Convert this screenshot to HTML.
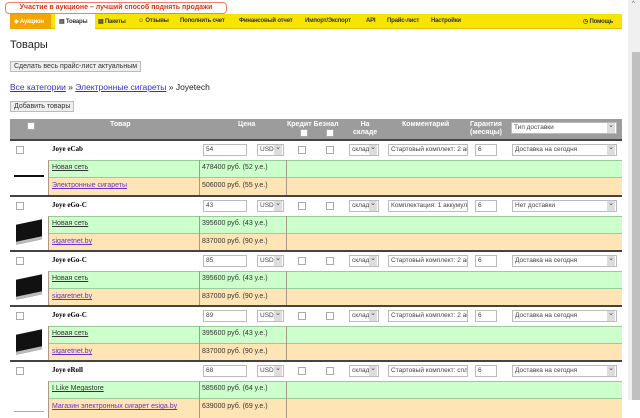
<!DOCTYPE html>
<html><head><meta charset="utf-8"><style>
*{margin:0;padding:0;box-sizing:border-box}
body{width:640px;height:400px;overflow:hidden;background:#fff;font-family:"Liberation Sans",sans-serif;position:relative}
.a{position:absolute}
.notice{left:5px;top:2px;width:222px;height:12px;border:1px solid #f08060;border-radius:4px;color:#e03010;font-size:7px;font-weight:bold;text-align:center;line-height:10px;background:#fff}
.nav{left:10px;top:14px;width:612px;height:15px;background:#f7e400;border-bottom:1px solid #e0c000}
.nav span{position:absolute;top:4px;font-size:6px;font-weight:bold;color:#333;white-space:nowrap;letter-spacing:-0.2px}
.btn{background:#eee;border:1px solid #bbb;font-size:7px;color:#333;padding:0 3px;height:11px;line-height:9px}
a,.lnk{color:#33c;text-decoration:underline}
.hd{left:10px;top:119px;width:612px;height:22px;background:#9c9c9c}
.hd span{position:absolute;color:#fff;font-size:7px;font-weight:bold;text-align:center;line-height:8px}
.cb{position:absolute;width:8px;height:8px;border:1px solid #aaa;background:#fff}
.blk{position:absolute;left:10px;width:612px;height:56px;border-top:2px solid #444}
.blk .w{position:absolute;left:0;top:0;width:612px;height:19px;background:#fff}
.blk .g{position:absolute;left:0;top:19px;width:612px;height:18px;background:#ccffcc;border-top:1px solid #9c9;border-bottom:1px solid #9c9}
.blk .p{position:absolute;left:0;top:37px;width:612px;height:19px;background:#ffe4b5}
.blk .img{position:absolute;left:0;top:19px;width:38px;height:37px;background:#fff}
.vl{position:absolute;top:19px;width:1px;height:37px;background:#a98}
.in{position:absolute;top:3px;height:12px;border:1px solid #bbb;background:#fff;font-size:6.5px;color:#444;line-height:10px;padding-left:2px;white-space:nowrap;overflow:hidden}
.sel:after{content:"⌄";position:absolute;right:1px;top:0;width:8px;height:10px;background:#ddd;font-size:7px;line-height:6px;text-align:center}
.nm{position:absolute;left:42px;top:4px;font-size:7px;font-weight:bold;font-family:"Liberation Serif",serif}
.tx{position:absolute;font-size:7px;color:#333;white-space:nowrap}
.im{position:absolute;left:6px;top:6px;width:26px;height:20px;background:#111;transform:skewY(-12deg);border-bottom:3px solid #bbb}
</style></head><body>
<div class="a notice">Участие в аукционе – лучший способ поднять продажи</div>
<div class="a nav">
<div class="a" style="left:0;top:0;width:41px;height:15px;background:#f5a500"></div>
<div class="a" style="left:45px;top:0;width:40px;height:16px;background:#fff"></div>
<span style="left:4px;color:#fff">◆ Аукцион</span>
<span style="left:49px">▤ Товары</span>
<span style="left:88px">▤ Пакеты</span>
<span style="left:128px">☺ Отзывы</span>
<span style="left:170px">Пополнить счет</span>
<span style="left:229px">Финансовый отчет</span>
<span style="left:295px">Импорт/Экспорт</span>
<span style="left:356px">API</span>
<span style="left:377px">Прайс-лист</span>
<span style="left:421px">Настройки</span>
<span style="left:573px">◷ Помощь</span>
</div>
<div class="a" style="left:10px;top:39px;font-size:11px;color:#222">Товары</div>
<div class="a btn" style="left:10px;top:61px">Сделать весь прайс-лист актуальным</div>
<div class="a" style="left:10px;top:82px;font-size:8.5px;color:#222"><span class="lnk">Все категории</span> » <span class="lnk">Электронные сигареты</span> » Joyetech</div>
<div class="a btn" style="left:10px;top:101px">Добавить товары</div>
<div class="a hd">
<div class="cb" style="left:17px;top:3px"></div>
<span style="left:100px;top:2px">Товар</span>
<span style="left:228px;top:2px">Цена</span>
<span style="left:277px;top:2px">Кредит Безнал</span>
<div class="cb" style="left:290px;top:10px"></div><div class="cb" style="left:316px;top:10px"></div>
<span style="left:343px;top:2px">На<br>складе</span>
<span style="left:392px;top:2px">Комментарий</span>
<span style="left:460px;top:2px">Гарантия<br>(месяцы)</span>
<div class="in sel" style="left:501px;top:3px;width:106px">Тип доставки</div>
</div>

<div class="blk" style="top:139px">
<div class="w"></div><div class="g"></div><div class="p"></div><div class="img"><div class="a" style="left:4px;top:15px;width:30px;height:2px;background:#111"></div></div>
<div class="vl" style="left:38px"></div><div class="vl" style="left:189px"></div><div class="vl" style="left:276px"></div>
<div class="cb" style="left:6px;top:5px"></div><div class="nm">Joye eCab</div>
<div class="in" style="left:193px;width:44px">54</div><div class="in sel" style="left:247px;width:27px">USD</div>
<div class="cb" style="left:288px;top:5px"></div><div class="cb" style="left:316px;top:5px"></div>
<div class="in sel" style="left:339px;width:30px">склад</div><div class="in" style="left:378px;width:80px">Стартовый комплект: 2 ак</div>
<div class="in" style="left:465px;width:22px">6</div><div class="in sel" style="left:502px;width:105px">Доставка на сегодня</div>
<div class="tx lnk" style="left:42px;top:23px">Новая сеть</div><div class="tx" style="left:192px;top:23px">478400 руб. (52 у.е.)</div>
<div class="tx lnk" style="left:42px;top:41px;color:#63c">Электронные сигареты</div><div class="tx" style="left:192px;top:41px">506000 руб. (55 у.е.)</div>
</div>

<div class="blk" style="top:195px">
<div class="w"></div><div class="g"></div><div class="p"></div><div class="img"><div class="im"></div></div>
<div class="vl" style="left:38px"></div><div class="vl" style="left:189px"></div><div class="vl" style="left:276px"></div>
<div class="cb" style="left:6px;top:5px"></div><div class="nm">Joye eGo-C</div>
<div class="in" style="left:193px;width:44px">43</div><div class="in sel" style="left:247px;width:27px">USD</div>
<div class="cb" style="left:288px;top:5px"></div><div class="cb" style="left:316px;top:5px"></div>
<div class="in sel" style="left:339px;width:30px">склад</div><div class="in" style="left:378px;width:80px">Комплектация: 1 аккумул</div>
<div class="in" style="left:465px;width:22px">6</div><div class="in sel" style="left:502px;width:105px">Нет доставки</div>
<div class="tx lnk" style="left:42px;top:23px">Новая сеть</div><div class="tx" style="left:192px;top:23px">395600 руб. (43 у.е.)</div>
<div class="tx lnk" style="left:42px;top:41px;color:#63c">sigaretnet.by</div><div class="tx" style="left:192px;top:41px">837000 руб. (90 у.е.)</div>
</div>

<div class="blk" style="top:250px">
<div class="w"></div><div class="g"></div><div class="p"></div><div class="img"><div class="im"></div></div>
<div class="vl" style="left:38px"></div><div class="vl" style="left:189px"></div><div class="vl" style="left:276px"></div>
<div class="cb" style="left:6px;top:5px"></div><div class="nm">Joye eGo-C</div>
<div class="in" style="left:193px;width:44px">85</div><div class="in sel" style="left:247px;width:27px">USD</div>
<div class="cb" style="left:288px;top:5px"></div><div class="cb" style="left:316px;top:5px"></div>
<div class="in sel" style="left:339px;width:30px">склад</div><div class="in" style="left:378px;width:80px">Стартовый комплект: 2 ак</div>
<div class="in" style="left:465px;width:22px">6</div><div class="in sel" style="left:502px;width:105px">Доставка на сегодня</div>
<div class="tx lnk" style="left:42px;top:23px">Новая сеть</div><div class="tx" style="left:192px;top:23px">395600 руб. (43 у.е.)</div>
<div class="tx lnk" style="left:42px;top:41px;color:#63c">sigaretnet.by</div><div class="tx" style="left:192px;top:41px">837000 руб. (90 у.е.)</div>
</div>

<div class="blk" style="top:305px">
<div class="w"></div><div class="g"></div><div class="p"></div><div class="img"><div class="im"></div></div>
<div class="vl" style="left:38px"></div><div class="vl" style="left:189px"></div><div class="vl" style="left:276px"></div>
<div class="cb" style="left:6px;top:5px"></div><div class="nm">Joye eGo-C</div>
<div class="in" style="left:193px;width:44px">89</div><div class="in sel" style="left:247px;width:27px">USD</div>
<div class="cb" style="left:288px;top:5px"></div><div class="cb" style="left:316px;top:5px"></div>
<div class="in sel" style="left:339px;width:30px">склад</div><div class="in" style="left:378px;width:80px">Стартовый комплект: 2 ак</div>
<div class="in" style="left:465px;width:22px">6</div><div class="in sel" style="left:502px;width:105px">Доставка на сегодня</div>
<div class="tx lnk" style="left:42px;top:23px">Новая сеть</div><div class="tx" style="left:192px;top:23px">395600 руб. (43 у.е.)</div>
<div class="tx lnk" style="left:42px;top:41px;color:#63c">sigaretnet.by</div><div class="tx" style="left:192px;top:41px">837000 руб. (90 у.е.)</div>
</div>

<div class="blk" style="top:360px">
<div class="w"></div><div class="g"></div><div class="p"></div><div class="img"><div class="a" style="left:4px;top:30px;width:30px;height:1px;background:#aaa"></div></div>
<div class="vl" style="left:38px"></div><div class="vl" style="left:189px"></div><div class="vl" style="left:276px"></div>
<div class="cb" style="left:6px;top:5px"></div><div class="nm">Joye eRoll</div>
<div class="in" style="left:193px;width:44px">68</div><div class="in sel" style="left:247px;width:27px">USD</div>
<div class="cb" style="left:288px;top:5px"></div><div class="cb" style="left:316px;top:5px"></div>
<div class="in sel" style="left:339px;width:30px">склад</div><div class="in" style="left:378px;width:80px">Стартовый комплект: спл</div>
<div class="in" style="left:465px;width:22px">6</div><div class="in sel" style="left:502px;width:105px">Доставка на сегодня</div>
<div class="tx lnk" style="left:42px;top:23px">I Like Megastore</div><div class="tx" style="left:192px;top:23px">585600 руб. (64 у.е.)</div>
<div class="tx lnk" style="left:42px;top:41px;color:#63c">Магазин электронных сигарет esiga.by</div><div class="tx" style="left:192px;top:41px">639000 руб. (69 у.е.)</div>
</div>

<div class="a" style="left:628px;top:0;width:12px;height:400px;background:#f0f0f0"></div>
<div class="a" style="left:632px;top:52px;width:8px;height:348px;background:#c0c0c0"></div>
<div class="a" style="left:632px;top:1px;font-size:6px;color:#555">^</div>
</body></html>
